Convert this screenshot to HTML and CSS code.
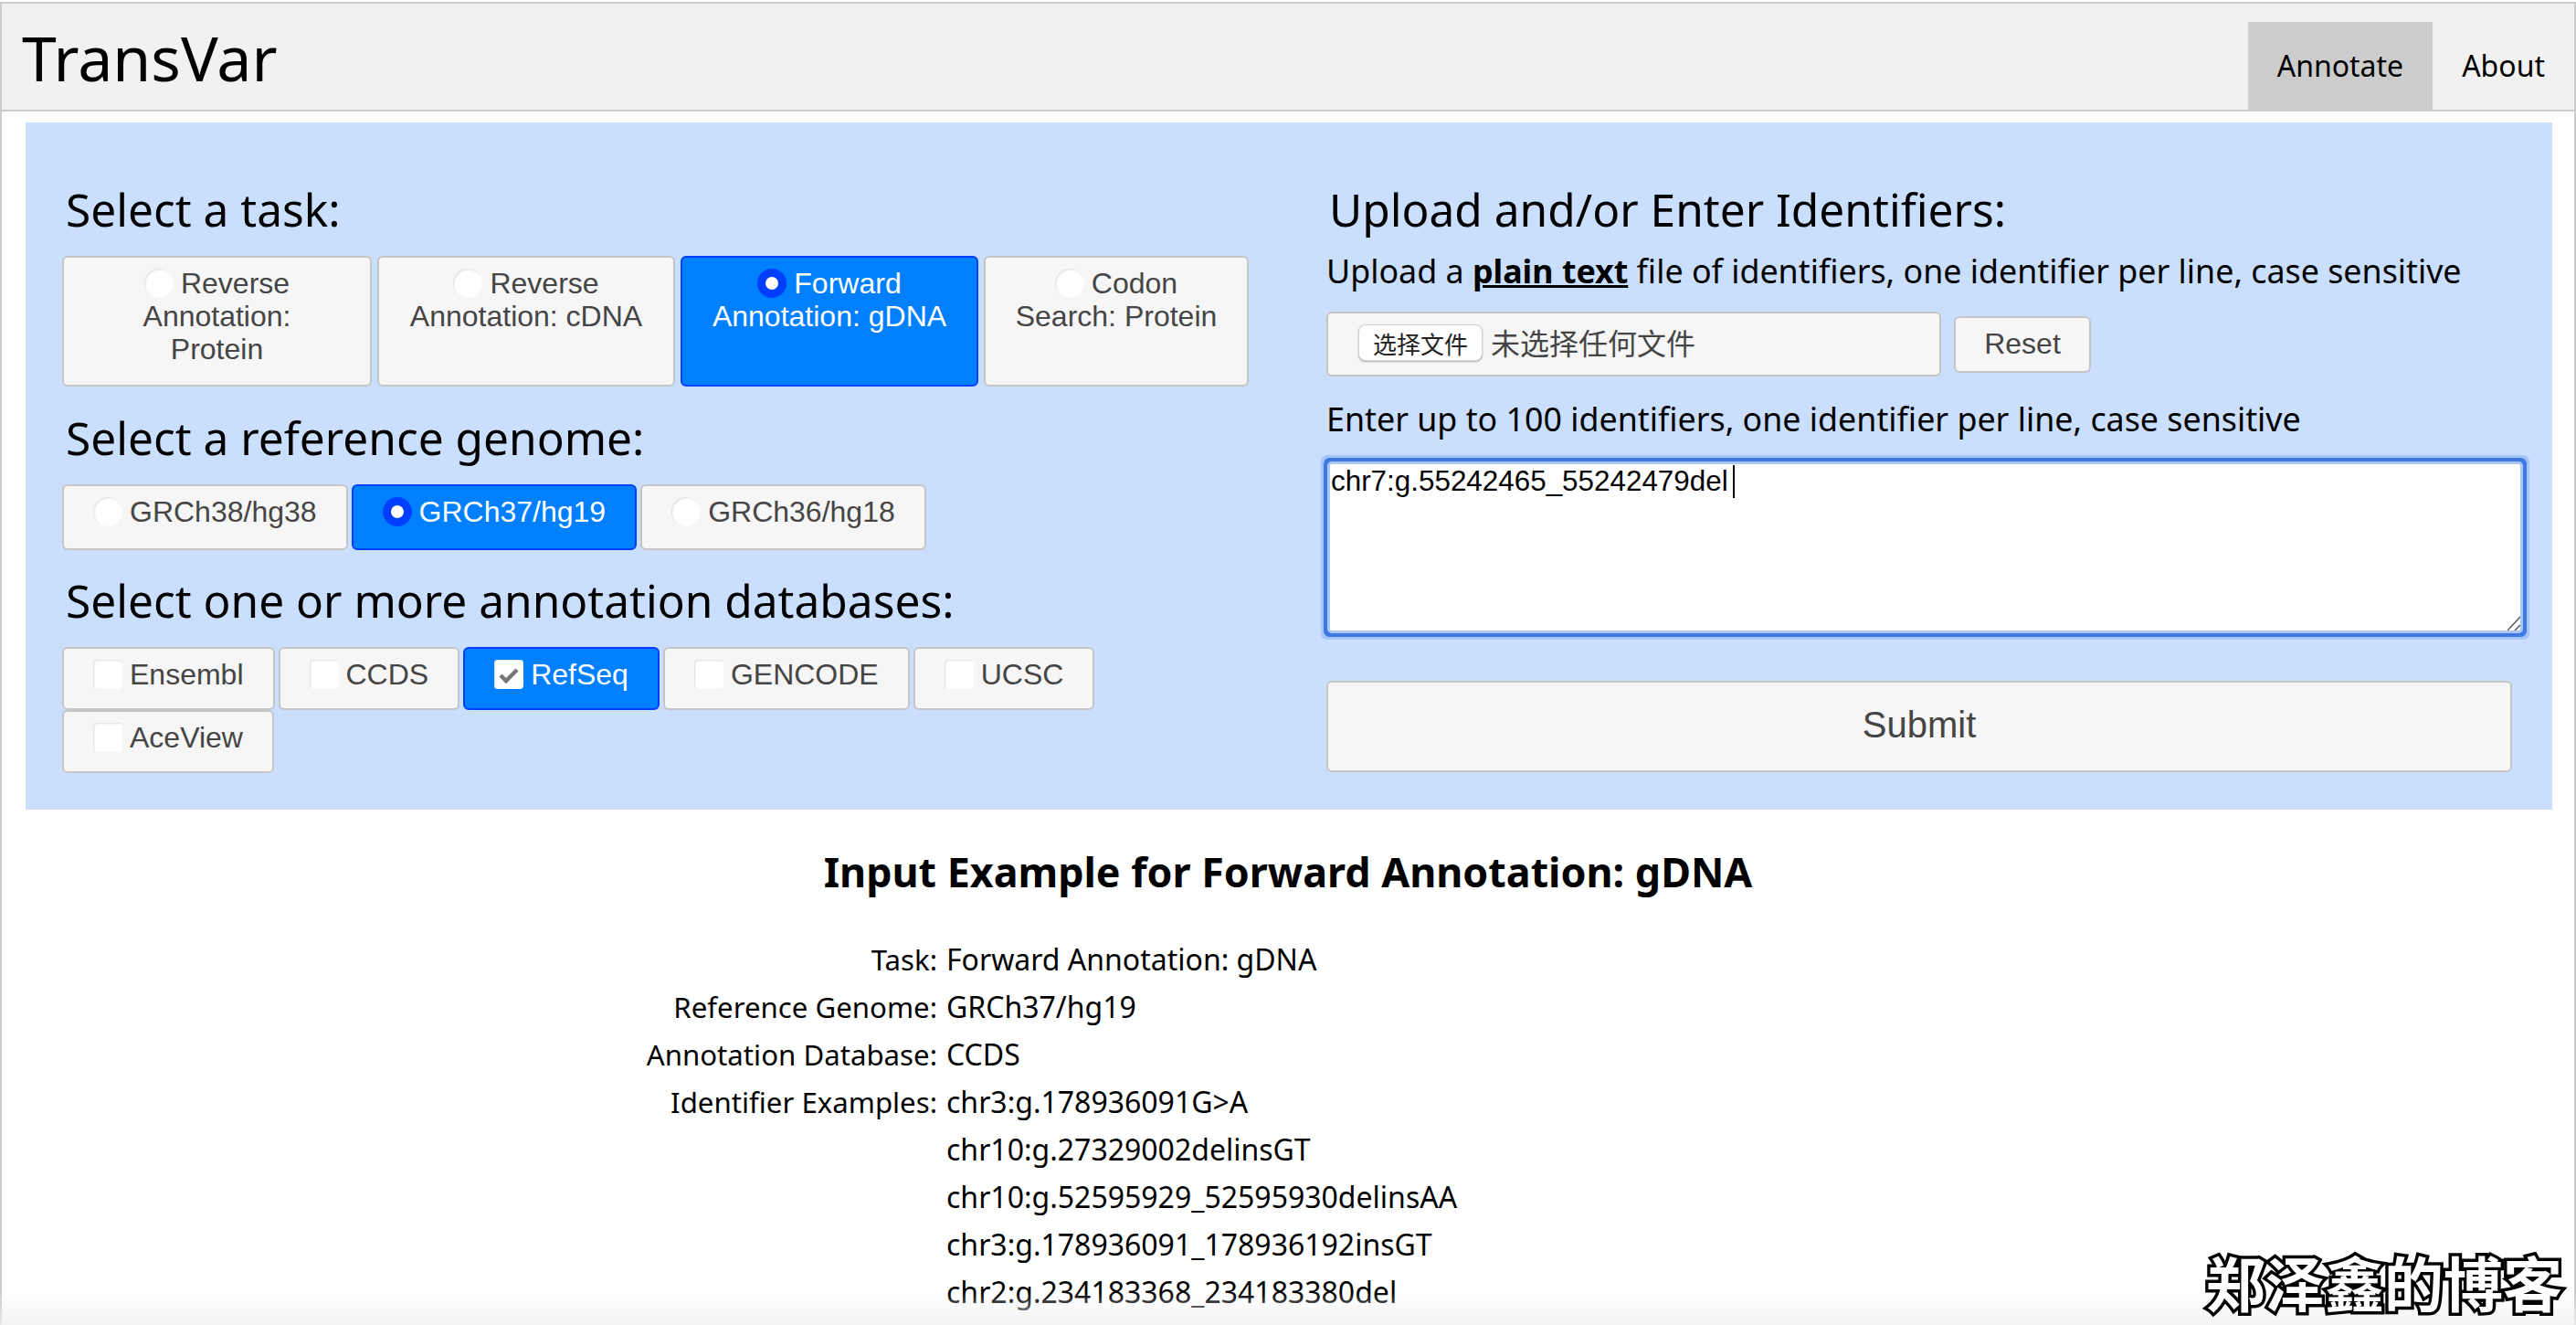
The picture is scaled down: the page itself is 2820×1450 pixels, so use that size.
FILE: index.html
```html
<!DOCTYPE html>
<html lang="en">
  <head>
    <meta charset="UTF-8" />
    <title>TransVar</title>
    <link rel="stylesheet" href="styles.css">
  </head>
  <body>
    <div class="page">
      <header class="topbar">
        <div class="brand">TransVar</div>
        <nav class="nav">
          <a class="nav-item nav-active">Annotate</a>
          <a class="nav-item">About</a>
        </nav>
      </header>

      <section class="panel">
        <div class="col-left">
          <h3 class="task-title">Select a task:</h3>
          <div class="task-grid">
            <label class="btn"><span class="radio"></span>Reverse Annotation:<br>Protein</label>
            <label class="btn"><span class="radio"></span>Reverse Annotation: cDNA</label>
            <label class="btn btn-on"><span class="radio"></span>Forward Annotation: gDNA</label>
            <label class="btn"><span class="radio"></span>Codon Search: Protein</label>
          </div>

          <h3 class="genome-title">Select a reference genome:</h3>
          <div class="btn-row genome-row">
            <label class="btn"><span class="radio"></span>GRCh38/hg38</label>
            <label class="btn btn-on"><span class="radio"></span>GRCh37/hg19</label>
            <label class="btn"><span class="radio"></span>GRCh36/hg18</label>
          </div>

          <h3 class="db-title">Select one or more annotation databases:</h3>
          <div class="btn-row db-row">
            <label class="btn"><span class="check"></span>Ensembl</label>
            <label class="btn"><span class="check"></span>CCDS</label>
            <label class="btn btn-on">
              <span class="check"><svg viewBox="0 0 32 32" width="32" height="32"><path d="M7 17l6 6L25 11" fill="none" stroke="#777" stroke-width="4.5"/></svg></span>RefSeq
            </label>
            <label class="btn"><span class="check"></span>GENCODE</label>
            <label class="btn"><span class="check"></span>UCSC</label>
            <label class="btn"><span class="check"></span>AceView</label>
          </div>
        </div>

        <div class="col-right">
          <h3 class="upload-title">Upload and/or Enter Identifiers:</h3>
          <p class="hint">Upload a <a class="plain-link">plain text</a> file of identifiers, one identifier per line, case sensitive</p>
          <div class="file-row">
            <div class="file-box">
              <span class="file-btn">选择文件</span>
              <span class="file-name">未选择任何文件</span>
            </div>
            <div class="reset-btn">Reset</div>
          </div>
          <p class="hint hint-enter">Enter up to 100 identifiers, one identifier per line, case sensitive</p>
          <div class="text-box">
            <span class="text-value">chr7:g.55242465_55242479del</span><span class="caret"></span>
            <svg class="grip" viewBox="0 0 14 16" width="14" height="16"><path d="M0 16L14 1M8 16L14 10" stroke="#555" stroke-width="1.5" fill="none"/></svg>
          </div>
          <div class="submit-btn">Submit</div>
        </div>
      </section>

      <section class="example">
        <h2 class="example-title">Input Example for Forward Annotation: gDNA</h2>
        <div class="example-table">
          <div class="ex-label">Task:</div><div class="ex-value">Forward Annotation: gDNA</div>
          <div class="ex-label">Reference Genome:</div><div class="ex-value">GRCh37/hg19</div>
          <div class="ex-label">Annotation Database:</div><div class="ex-value">CCDS</div>
          <div class="ex-label">Identifier Examples:</div><div class="ex-value">chr3:g.178936091G&gt;A</div>
          <div class="ex-label"></div><div class="ex-value">chr10:g.27329002delinsGT</div>
          <div class="ex-label"></div><div class="ex-value">chr10:g.52595929_52595930delinsAA</div>
          <div class="ex-label"></div><div class="ex-value">chr3:g.178936091_178936192insGT</div>
          <div class="ex-label"></div><div class="ex-value">chr2:g.234183368_234183380del</div>
        </div>
      </section>
    </div>

    <div class="fade"></div>
    <div class="watermark">郑泽鑫的博客</div>
  </body>
</html>
```

FILE: styles.css
```css
html, body {
  height: 1450px;
  overflow: hidden;
}

body {
  margin: 0;
  background-color: #fff;
  color: #000;
  font-family: "Noto Sans", sans-serif;
  position: relative;
}

.page {
  margin-top: 2px;
  height: 1448px;
  box-sizing: border-box;
  border-top: 2px solid #ccc;
  border-left: 2px solid #ccc;
  border-right: 2px solid #ccc;
}

.topbar {
  height: 116px;
  display: flex;
  justify-content: space-between;
  align-items: flex-end;
  background-color: #f1f1f1;
  border-bottom: 2px solid #ccc;
}

.brand {
  font-size: 68px;
  line-height: 96px;
  margin-left: 22px;
  margin-bottom: 9px;
}

.nav {
  display: flex;
  height: 96px;
}

.nav-item {
  display: flex;
  align-items: center;
  padding: 0 32px 2px;
  font-size: 32px;
}

.nav-active {
  background-color: #ccc;
}

.panel {
  margin: 12px 24px 0 26px;
  height: 752px;
  box-sizing: border-box;
  background-color: #cadefd;
  display: grid;
  grid-template-columns: 1384px 1fr;
  padding-left: 40px;
}

h3 {
  font-weight: 400;
  font-size: 49.6px;
  line-height: 60px;
  margin: 0;
}

.task-title {
  margin: 65px 0 0 4px;
}

.genome-title {
  margin: 26px 0 0 4px;
}

.db-title {
  margin: 25px 0 0 4px;
}

.upload-title {
  margin: 65px 0 0 3px;
}

.task-grid {
  display: grid;
  grid-template-columns: 339px 326px 326px 290px;
  column-gap: 6px;
  height: 143px;
  margin-top: 21px;
}

.btn {
  display: inline-block;
  box-sizing: border-box;
  background-color: #f6f6f6;
  border: 2px solid #c5c5c5;
  border-radius: 6px;
  color: #454545;
  font-family: "Liberation Sans", Arial, sans-serif;
  font-size: 32px;
  line-height: 36px;
  padding: 10px 32px;
  text-align: center;
  white-space: nowrap;
}

.task-grid .btn {
  white-space: normal;
  padding: 10px 20px;
}

.btn-on {
  background-color: #007fff;
  border-color: #003eff;
  color: #fff;
}

.btn-row {
  display: flex;
  flex-wrap: wrap;
  column-gap: 4px;
  width: 1340px;
}

.genome-row {
  margin-top: 21px;
}

.genome-row .btn {
  height: 72px;
}

.db-row {
  margin-top: 21px;
}

.db-row .btn {
  height: 69px;
}

.radio,
.check {
  display: inline-block;
  width: 32px;
  height: 32px;
  margin-right: 8px;
  background-color: #fff;
  vertical-align: -5px;
  box-shadow: inset 1px 1px 2px #ddd;
}

.radio {
  border-radius: 50%;
  box-sizing: border-box;
}

.check {
  border-radius: 4px;
}

.check svg {
  display: block;
}

.btn-on .radio {
  border: 9px solid #003eff;
  box-shadow: none;
}

.hint {
  margin: 15px 0 0;
  font-size: 35.8px;
  line-height: 44px;
}

.hint-enter {
  margin-top: 24px;
}

.plain-link {
  font-weight: 700;
  text-decoration: underline;
}

.file-row {
  display: flex;
  align-items: center;
  gap: 14px;
  margin-top: 23px;
}

.file-box {
  width: 673px;
  height: 71px;
  box-sizing: border-box;
  background-color: #f6f6f6;
  border: 2px solid #c5c5c5;
  border-radius: 6px;
  display: flex;
  align-items: center;
  padding: 0 0 3px 33px;
  color: #454545;
}

.file-btn {
  box-sizing: border-box;
  width: 136px;
  height: 40px;
  display: flex;
  align-items: center;
  justify-content: center;
  background-color: #fff;
  border: 1px solid #d4d4d4;
  border-radius: 8px;
  box-shadow: 0 1px 2px #aaa;
  font-family: "Noto Sans CJK SC", sans-serif;
  font-size: 26px;
  color: #222;
}

.file-name {
  font-family: "Noto Sans CJK SC", sans-serif;
  font-size: 32px;
  margin: 0 0 3px 9px;
}

.reset-btn {
  width: 150px;
  height: 62px;
  box-sizing: border-box;
  background-color: #f6f6f6;
  border: 2px solid #c5c5c5;
  border-radius: 6px;
  display: flex;
  align-items: center;
  justify-content: center;
  font-family: "Liberation Sans", Arial, sans-serif;
  font-size: 32px;
  color: #454545;
}

.text-box {
  position: relative;
  box-sizing: border-box;
  width: 1303px;
  height: 182px;
  margin-top: 28px;
  margin-left: 4px;
  background-color: #fff;
  border-radius: 2px;
  box-shadow: 0 0 0 3px #a9c8f8, 0 0 0 7px #3f78de, 0 0 0 10px #a4c6fb;
  padding: 1px 1px;
  font-family: "Liberation Sans", Arial, sans-serif;
  font-size: 31.4px;
  line-height: 36px;
}

.caret {
  display: inline-block;
  width: 2px;
  height: 36px;
  margin-left: 5px;
  background-color: #000;
  vertical-align: top;
}

.grip {
  position: absolute;
  right: 0;
  bottom: 0;
}

.submit-btn {
  width: 1298px;
  height: 100px;
  box-sizing: border-box;
  margin-top: 55px;
  padding-bottom: 4px;
  background-color: #f6f6f6;
  border: 2px solid #c5c5c5;
  border-radius: 6px;
  display: flex;
  align-items: center;
  justify-content: center;
  font-family: "Liberation Sans", Arial, sans-serif;
  font-size: 40px;
  color: #454545;
}

.example-title {
  margin: 38px 0 0;
  text-align: center;
  font-size: 44.8px;
  line-height: 60px;
  font-weight: 700;
}

.example-table {
  display: grid;
  grid-template-columns: 1024px auto;
  column-gap: 10px;
  grid-auto-rows: 52px;
  margin-top: 40px;
  font-size: 32px;
  line-height: 52px;
}

.ex-label {
  text-align: right;
  font-size: 31.2px;
}

.fade {
  position: absolute;
  left: 0;
  right: 0;
  bottom: 0;
  height: 36px;
  background: linear-gradient(to bottom, rgba(240, 240, 240, 0), rgba(240, 240, 240, 0.8));
}

.watermark {
  position: absolute;
  right: 15px;
  bottom: 9px;
  font-family: "Noto Sans CJK SC", sans-serif;
  font-weight: 700;
  font-size: 65px;
  line-height: 78px;
  color: #fff;
  -webkit-text-stroke: 7px #000;
  paint-order: stroke fill;
}
```
